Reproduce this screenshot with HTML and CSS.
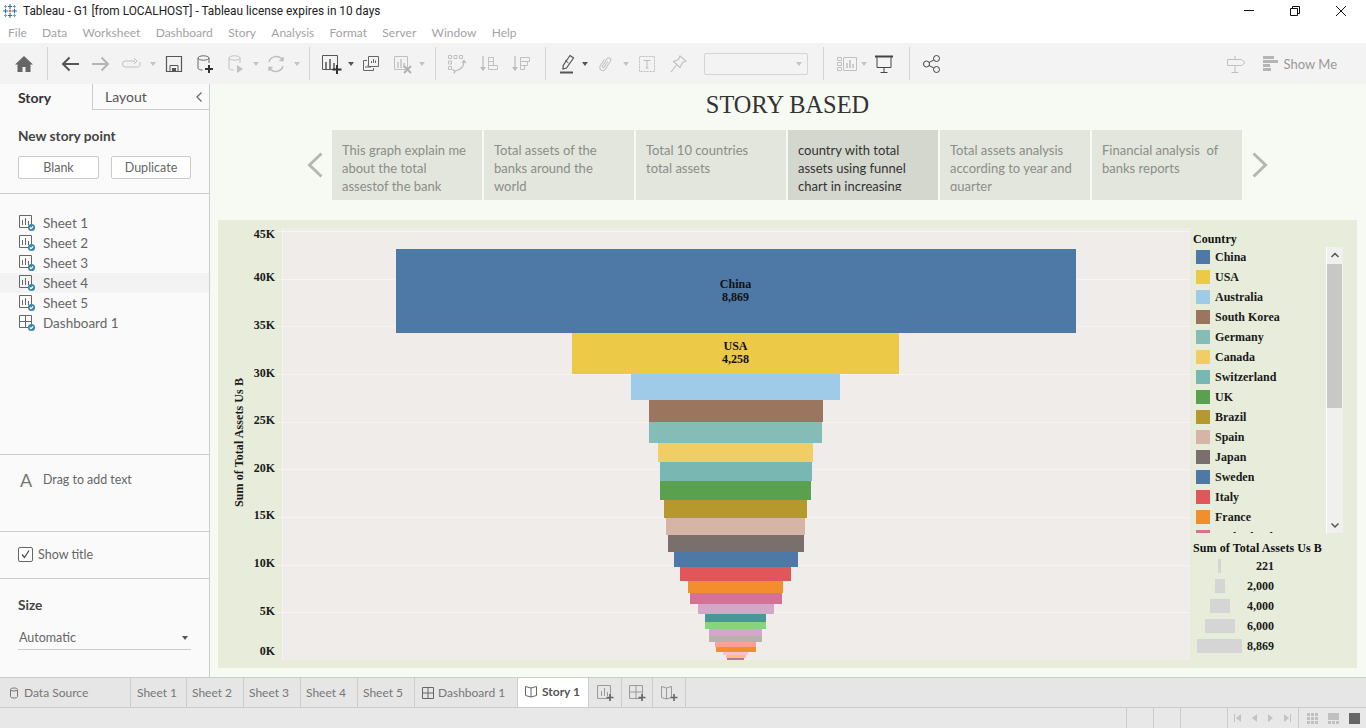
FILE: index.html
```html
<!DOCTYPE html>
<html lang="en">
<head>
    <meta charset="UTF-8">
    <title>Tableau - G1 [from LOCALHOST] - Tableau license expires in 10 days</title>
    <link rel="stylesheet" href="styles.css">
</head>
<body>
    <!-- Icon sprites -->
    <svg class="sprites" xmlns="http://www.w3.org/2000/svg">
        <symbol id="i-sheet" viewBox="0 0 18 18">
            <path d="M1.5 1.5h12v12h-12z" fill="none" stroke="#666"/>
            <path d="M4.5 6v5M7.5 4v7M10.5 7v4" stroke="#666" fill="none"/>
            <circle cx="13.5" cy="13.5" r="3.6" fill="#3f87a6"/>
            <path d="M11.8 13.5l1.2 1.2 2.1-2.2" stroke="#fff" stroke-width="1.1" fill="none"/>
        </symbol>
        <symbol id="i-dash" viewBox="0 0 18 18">
            <path d="M1.5 1.5h12v12h-12zM7.5 1.5v12M1.5 7.5h12" fill="none" stroke="#666"/>
            <circle cx="13.5" cy="13.5" r="3.6" fill="#3f87a6"/>
            <path d="M11.8 13.5l1.2 1.2 2.1-2.2" stroke="#fff" stroke-width="1.1" fill="none"/>
        </symbol>
        <symbol id="i-plus-sheet" viewBox="0 0 20 20">
            <path d="M2.5 2.5h13v13h-13z" fill="none" stroke="#999"/>
            <path d="M6.5 8v5M9.5 5v8M12.5 9v4" stroke="#999" fill="none"/>
            <path d="M15 11v7M11.5 14.5h7" stroke="#666" stroke-width="1.6"/>
        </symbol>
        <symbol id="i-plus-dash" viewBox="0 0 20 20">
            <path d="M2.5 2.5h13v13h-13zM9 2.5v13M2.5 9h13" fill="none" stroke="#999"/>
            <path d="M15 11v7M11.5 14.5h7" stroke="#666" stroke-width="1.6"/>
        </symbol>
        <symbol id="i-plus-story" viewBox="0 0 20 20">
            <path d="M2.5 3.5l5 1.5 5-1.5v11l-5 1.500-5-1.500zM7.500 5v11" fill="none" stroke="#999"/>
            <path d="M15 11v7M11.500 14.500h7" stroke="#666" stroke-width="1.6"/>
        </symbol>
    </svg>

    <header class="titlebar">
        <svg class="app-logo" width="14" height="14" viewBox="0 0 14 14">
            <path d="M7 0v5M4.800 2.500h4.400M7 9v5M4.800 11.500h4.400M0 7h5M2.500 4.800v4.400M9 7h5M11.500 4.800v4.400" stroke="#2e6f9e" stroke-width="1.100" fill="none"/>
            <path d="M2.500 1v3M1 2.500h3M11.500 1v3M10 2.500h3M2.500 10v3M1 11.500h3M11.500 10v3M10 11.500h3" stroke="#6fa3c4" stroke-width="1" fill="none"/>
            <path d="M7 5.500v3M5.500 7h3" stroke="#c0473f" stroke-width="1"/>
        </svg>
        <span class="app-title">Tableau - G1 [from LOCALHOST] - Tableau license expires in 10 days</span>
        <div class="window-controls">
            <svg width="12" height="12" viewBox="0 0 12 12"><path d="M1 5.500h10" stroke="#111"/></svg>
            <svg width="12" height="12" viewBox="0 0 12 12"><path d="M1.500 3.500h7v7h-7zM3.500 3.500v-2h7v7h-2" fill="none" stroke="#111"/></svg>
            <svg width="12" height="12" viewBox="0 0 12 12"><path d="M1 1l10 10M11 1l-10 10" stroke="#111"/></svg>
        </div>
    </header>

    <nav class="menubar">
        <span>File</span><span>Data</span><span>Worksheet</span><span>Dashboard</span><span>Story</span><span>Analysis</span><span>Format</span><span>Server</span><span>Window</span><span>Help</span>
    </nav>

    <div class="toolbar">
        <div class="tool-group group-home">
            <span class="tool"><svg width="20" height="20" viewBox="0 0 20 20"><path d="M10 2L1 10.500h2.500V18h5v-5h3v5h5v-7.500H19z" fill="#666"/></svg></span>
        </div>
        <div class="tool-group group-file">
            <span class="tool"><svg width="20" height="20" viewBox="0 0 20 20"><path d="M19 10H3M9.500 3.500L3 10l6.500 6.500" fill="none" stroke="#555" stroke-width="2"/></svg></span>
            <span class="tool"><svg width="20" height="20" viewBox="0 0 20 20"><path d="M1 10h16M10.500 3.500L17 10l-6.500 6.500" fill="none" stroke="#b5b5b5" stroke-width="2"/></svg></span>
            <span class="tool"><svg width="20" height="20" viewBox="0 0 20 20"><path d="M13 7H3.500a2.500 2.500 0 0 0 0 6h12a2.500 2.500 0 0 0 2.500-3V8M12 4l3 3-3 3" fill="none" stroke="#c0c0c0"/></svg></span>
            <span class="caret-box"><i class="caret caret-off"></i></span>
            <span class="tool"><svg width="20" height="20" viewBox="0 0 20 20"><path d="M2.500 2.500h15v15h-15z" fill="none" stroke="#555" stroke-width="1.200"/><path d="M6 17v-5.500h8V17" fill="none" stroke="#555"/><path d="M8 14h4v3H8z" fill="#555"/></svg></span>
            <span class="tool"><svg width="20" height="20" viewBox="0 0 20 20"><ellipse cx="8.500" cy="4" rx="5.500" ry="2.200" fill="none" stroke="#666"/><path d="M3 4v10c0 1.300 2 2 4.500 2M14 4v5" fill="none" stroke="#666"/><path d="M14 11v8M10 15h8" stroke="#333" stroke-width="2"/></svg></span>
            <span class="tool"><svg width="20" height="20" viewBox="0 0 20 20"><ellipse cx="8.500" cy="4" rx="5.500" ry="2.200" fill="none" stroke="#c0c0c0"/><path d="M3 4v10c0 1.300 2 2 4.500 2M14 4v5" fill="none" stroke="#c0c0c0"/><path d="M11 11l6 4-6 4z" fill="#c0c0c0"/></svg></span>
            <span class="caret-box caret-box-sm"><i class="caret caret-off"></i></span>
            <span class="tool"><svg width="20" height="20" viewBox="0 0 20 20"><path d="M3 8a7.500 7.500 0 0 1 13.500-2M17 12a7.500 7.500 0 0 1-13.500 2M13.500 6.500h3.500V3M6.500 13.500H3V17" fill="none" stroke="#bdbdbd" stroke-width="1.400"/></svg></span>
            <span class="caret-box"><i class="caret caret-off"></i></span>
        </div>
        <div class="tool-group group-sheet">
            <span class="tool"><svg width="22" height="22" viewBox="0 0 22 22"><path d="M2.500 2.500h15v14h-15z" fill="none" stroke="#555"/><path d="M6 9v7M10 6v10M14 10v6" stroke="#555" stroke-width="1.500"/><path d="M17 12v9M12.500 16.500h9" stroke="#333" stroke-width="2"/></svg></span>
            <span class="caret-box caret-box-sm"><i class="caret"></i></span>
            <span class="tool"><svg width="20" height="20" viewBox="0 0 20 20"><path d="M7.500 2.500h10v10h-10z" fill="none" stroke="#666"/><path d="M10.500 9V7M12.500 9V5M14.500 9V6.500" stroke="#666"/><path d="M6 6.500H2.500v10h10V14" fill="none" stroke="#666"/><path d="M5 14v-2M7 14v-3M9 14v-1.500" stroke="#666"/></svg></span>
            <span class="tool"><svg width="20" height="20" viewBox="0 0 20 20"><path d="M2.500 2.500h13v13h-13z" fill="none" stroke="#c0c0c0"/><path d="M6 8v6M9 5v9M12 9v5" stroke="#c0c0c0" stroke-width="1.400"/><path d="M12 12l7 7M19 12l-7 7" stroke="#b0b0b0" stroke-width="1.800"/></svg></span>
            <span class="caret-box caret-box-sm"><i class="caret caret-off"></i></span>
        </div>
        <div class="tool-group group-sort">
            <span class="tool"><svg width="20" height="20" viewBox="0 0 20 20"><path d="M1.500 1.500h3v3h-3zM7 1.500h3v3H7zM12.500 1.500h3v3h-3zM1.500 7h3v3h-3zM1.500 12.500h3v3h-3z" fill="none" stroke="#c0c0c0"/><path d="M17 7c0 5-3 9-9 10M5.500 15.500L8 17l-1 2.500M15 9l2-2.500 2 2.500" fill="none" stroke="#b8b8b8" stroke-width="1.200"/></svg></span>
            <span class="tool"><svg width="20" height="20" viewBox="0 0 20 20"><path d="M4 2v14" stroke="#bbb" stroke-width="1.200"/><path d="M1 13l3 4 3-4z" fill="#bbb"/><path d="M9.500 3.500h5v4h-5zM9.500 7.500h5v4h-5zM9.500 11.500h9v4h-9z" fill="none" stroke="#c0c0c0"/></svg></span>
            <span class="tool"><svg width="20" height="20" viewBox="0 0 20 20"><path d="M4 2v14" stroke="#bbb" stroke-width="1.200"/><path d="M1 13l3 4 3-4z" fill="#bbb"/><path d="M9.500 3.500h9v4h-9zM9.500 7.500h7v4h-7zM9.500 11.500h4v4h-4z" fill="none" stroke="#c0c0c0"/></svg></span>
        </div>
        <div class="tool-group group-format">
            <span class="tool tool-narrow"><svg width="20" height="20" viewBox="0 0 20 20"><path d="M12 1.500l3.500 2.500-7 10-3.500 1 .2-3.500z" fill="none" stroke="#555" stroke-width="1.200"/><path d="M7 6.500l3.500 2.500" stroke="#555"/><path d="M2 18.500h13" stroke="#555" stroke-width="2"/></svg></span>
            <span class="caret-box caret-box-sm"><i class="caret"></i></span>
            <span class="tool"><svg width="20" height="20" viewBox="0 0 20 20"><path d="M7 6.500V14a3 3 0 0 0 6 0V4.500a2 2 0 0 0-4 0V13a1 1 0 0 0 2 0V6.500" fill="none" stroke="#c4c4c4" stroke-width="1.100" transform="rotate(32 10 10)"/></svg></span>
            <span class="caret-box"><i class="caret caret-off"></i></span>
            <span class="tool"><svg width="20" height="20" viewBox="0 0 20 20"><path d="M2.500 2.500h15v15h-15z" fill="none" stroke="#bdbdbd" stroke-dasharray="2 1"/><path d="M6.500 6.500h7M10 6.500v7.500M8.500 14h3" fill="none" stroke="#bdbdbd"/></svg></span>
            <span class="tool"><svg width="20" height="20" viewBox="0 0 20 20"><path d="M12 2l6 5-3.500 1.500-2.500 5-6.500-6 5-2zM8.500 11L3 18" fill="none" stroke="#c0c0c0" stroke-width="1.100"/></svg></span>
            <span class="font-select"><i class="caret caret-off"></i></span>
        </div>
        <div class="tool-group group-view">
            <span class="tool tool-narrow"><svg width="20" height="20" viewBox="0 0 20 20"><path d="M.500 3.500h4v3h-4zM.500 8.500h4v3h-4zM.500 13.500h4v3h-4zM6.500 3.500h13v13h-13z" fill="none" stroke="#c0c0c0"/><path d="M10 9v5M13 6v8M16 10v4" stroke="#bbb" stroke-width="1.400"/></svg></span>
            <span class="caret-box caret-box-sm"><i class="caret caret-off"></i></span>
            <span class="tool"><svg width="20" height="20" viewBox="0 0 20 20"><path d="M1 2.500h18" stroke="#444" stroke-width="2"/><path d="M3 3v10.500h14V3M10 14v4M6.500 18.500h7" fill="none" stroke="#444"/></svg></span>
        </div>
        <div class="tool-group group-share">
            <span class="tool"><svg width="20" height="20" viewBox="0 0 20 20"><circle cx="14.500" cy="4.500" r="3" fill="none" stroke="#444"/><circle cx="14.500" cy="15.500" r="3" fill="none" stroke="#444"/><circle cx="4.500" cy="10" r="3" fill="none" stroke="#444"/><path d="M7.200 8.500l4.700-2.600M7.200 11.500l4.700 2.600" stroke="#444"/></svg></span>
        </div>
        <div class="toolbar-right">
            <svg width="20" height="20" viewBox="0 0 20 20"><path d="M1.500 5.500h14l3.500 3-3.500 3h-14zM9 2v3.500M9 11.500V18M5.500 18.500h7" fill="none" stroke="#c0c0c0"/></svg>
            <span class="show-me">
                <svg width="15" height="16" viewBox="0 0 15 16"><path d="M0 0h11v3H0zM0 4h15v3H0zM0 8h7v3H0zM0 12h8v3H0z" fill="#b5b5b5"/></svg>
                Show Me
            </span>
        </div>
    </div>

    <main class="main">
        <aside class="sidebar">
            <div class="side-tabs">
                <div class="side-tab active">Story</div>
                <div class="side-tab">Layout
                    <svg class="collapse" width="8" height="12" viewBox="0 0 8 12"><path d="M6.500 1.500L2 6l4.500 4.500" fill="none" stroke="#666" stroke-width="1.200"/></svg>
                </div>
            </div>
            <section class="side-new">
                <h3>New story point</h3>
                <div class="side-buttons">
                    <button class="btn btn-blank">Blank</button>
                    <button class="btn btn-dup">Duplicate</button>
                </div>
            </section>
            <section class="side-list">
                <div class="sheet-row"><svg width="18" height="18"><use href="#i-sheet"/></svg>Sheet 1</div>
                <div class="sheet-row"><svg width="18" height="18"><use href="#i-sheet"/></svg>Sheet 2</div>
                <div class="sheet-row"><svg width="18" height="18"><use href="#i-sheet"/></svg>Sheet 3</div>
                <div class="sheet-row hover"><svg width="18" height="18"><use href="#i-sheet"/></svg>Sheet 4</div>
                <div class="sheet-row"><svg width="18" height="18"><use href="#i-sheet"/></svg>Sheet 5</div>
                <div class="sheet-row"><svg width="18" height="18"><use href="#i-dash"/></svg>Dashboard 1</div>
            </section>
            <section class="side-text">
                <span class="big-a">A</span>Drag to add text
            </section>
            <section class="side-title">
                <span class="checkbox"><svg width="13" height="13" viewBox="0 0 13 13"><path d="M3 6.500l2.500 3L10 2.500" fill="none" stroke="#444" stroke-width="1.200"/></svg></span>Show title
            </section>
            <section class="side-size">
                <h3>Size</h3>
                <div class="size-select">Automatic<i class="caret"></i></div>
            </section>
        </aside>

        <div class="story">
            <h1 class="story-title">STORY BASED</h1>
            <div class="story-nav">
                <svg class="nav-prev" width="16" height="26" viewBox="0 0 16 26"><path d="M14.500 1.500L2.500 13l12 11.500" fill="none" stroke="#b5b8b0" stroke-width="3"/></svg>
                <div class="points">
                    <div class="point"><p>This graph explain me about the total assestof the bank</p></div>
                    <div class="point"><p>Total assets of the banks around the world</p></div>
                    <div class="point"><p>Total 10 countries total assets</p></div>
                    <div class="point current"><p>country with total assets using funnel chart in increasing order</p></div>
                    <div class="point"><p>Total assets analysis according to year and quarter</p></div>
                    <div class="point"><p>Financial analysis&nbsp; of banks reports</p></div>
                </div>
                <svg class="nav-next" width="16" height="26" viewBox="0 0 16 26"><path d="M1.500 1.500L13.500 13l-12 11.500" fill="none" stroke="#b5b8b0" stroke-width="3"/></svg>
            </div>

            <div class="dashboard">
                <div class="y-title"><span>Sum of Total Assets Us B</span></div>
                <div class="y-axis">
                    <div class="tick tick-top">45K</div>
                    <div class="tick">40K</div>
                    <div class="tick">35K</div>
                    <div class="tick">30K</div>
                    <div class="tick">25K</div>
                    <div class="tick">20K</div>
                    <div class="tick">15K</div>
                    <div class="tick">10K</div>
                    <div class="tick">5K</div>
                    <div class="tick tick-bottom">0K</div>
                </div>
                <div class="plot">
                    <div class="gridlines"></div>
                    <div class="funnel">
                        <div class="bar" style="width:680px;height:84px;background:#4e79a7">China<br>8,869</div>
                        <div class="bar" style="width:327px;height:41px;background:#edc948">USA<br>4,258</div>
                        <div class="bar" style="width:209px;height:26px;background:#a0cbe8"></div>
                        <div class="bar" style="width:174px;height:22px;background:#9c755f"></div>
                        <div class="bar" style="width:173px;height:21px;background:#86bcb6"></div>
                        <div class="bar" style="width:155px;height:19px;background:#f1ce63"></div>
                        <div class="bar" style="width:152px;height:19px;background:#79b7b2"></div>
                        <div class="bar" style="width:151px;height:19px;background:#59a14f"></div>
                        <div class="bar" style="width:143px;height:18px;background:#b6992d"></div>
                        <div class="bar" style="width:139px;height:17px;background:#d7b5a6"></div>
                        <div class="bar" style="width:136px;height:17px;background:#79706e"></div>
                        <div class="bar" style="width:124px;height:15px;background:#4e79a7"></div>
                        <div class="bar" style="width:111px;height:14px;background:#e15759"></div>
                        <div class="bar" style="width:95px;height:12px;background:#f28e2b"></div>
                        <div class="bar" style="width:92px;height:11px;background:#d37295"></div>
                        <div class="bar" style="width:76px;height:10px;background:#d4a6c8"></div>
                        <div class="bar" style="width:61px;height:8px;background:#499894"></div>
                        <div class="bar" style="width:61px;height:7px;background:#8cd17d"></div>
                        <div class="bar" style="width:53px;height:7px;background:#d4a6c8"></div>
                        <div class="bar" style="width:53px;height:6px;background:#bab0ac"></div>
                        <div class="bar" style="width:41px;height:5px;background:#ff9d9a"></div>
                        <div class="bar" style="width:40px;height:5px;background:#f28e2b"></div>
                        <div class="bar" style="width:25px;height:3px;background:#fabfd2"></div>
                        <div class="bar" style="width:20px;height:3px;background:#ffbe7d"></div>
                        <div class="bar" style="width:17px;height:2px;background:#b07aa1"></div>
                    </div>
                </div>
                <div class="legend">
                    <div class="legend-title">Country</div>
                    <div class="legend-scroll">
                        <div class="legend-items">
                            <div class="legend-item"><i style="background:#4e79a7"></i>China</div>
                            <div class="legend-item"><i style="background:#edc948"></i>USA</div>
                            <div class="legend-item"><i style="background:#a0cbe8"></i>Australia</div>
                            <div class="legend-item"><i style="background:#9c755f"></i>South Korea</div>
                            <div class="legend-item"><i style="background:#86bcb6"></i>Germany</div>
                            <div class="legend-item"><i style="background:#f1ce63"></i>Canada</div>
                            <div class="legend-item"><i style="background:#79b7b2"></i>Switzerland</div>
                            <div class="legend-item"><i style="background:#59a14f"></i>UK</div>
                            <div class="legend-item"><i style="background:#b6992d"></i>Brazil</div>
                            <div class="legend-item"><i style="background:#d7b5a6"></i>Spain</div>
                            <div class="legend-item"><i style="background:#79706e"></i>Japan</div>
                            <div class="legend-item"><i style="background:#4e79a7"></i>Sweden</div>
                            <div class="legend-item"><i style="background:#e15759"></i>Italy</div>
                            <div class="legend-item"><i style="background:#f28e2b"></i>France</div>
                            <div class="legend-item"><i style="background:#d37295"></i>Netherlands</div>
                        </div>
                        <div class="scrollbar">
                            <svg width="16" height="17" viewBox="0 0 16 17"><path d="M4.500 10l3.500-3.500 3.500 3.500" fill="none" stroke="#555" stroke-width="1.500"/></svg>
                            <div class="thumb"></div>
                            <div class="track"></div>
                            <svg width="16" height="15" viewBox="0 0 16 15"><path d="M4.500 5.500l3.500 3.500 3.500-3.500" fill="none" stroke="#555" stroke-width="1.500"/></svg>
                        </div>
                    </div>
                    <div class="legend-title size-title">Sum of Total Assets Us B</div>
                    <div class="size-row"><span class="size-cell"><i style="width:3px"></i></span><b>221</b></div>
                    <div class="size-row"><span class="size-cell"><i style="width:10px"></i></span><b>2,000</b></div>
                    <div class="size-row"><span class="size-cell"><i style="width:20px"></i></span><b>4,000</b></div>
                    <div class="size-row"><span class="size-cell"><i style="width:30px"></i></span><b>6,000</b></div>
                    <div class="size-row"><span class="size-cell"><i style="width:45px"></i></span><b>8,869</b></div>
                </div>
            </div>
        </div>
    </main>

    <div class="tabbar">
        <div class="tab tab-source">
            <svg width="10" height="12" viewBox="0 0 10 12"><path d="M1.500 2.500c0-2 7-2 7 0v7c0 2-7 2-7 0zM1.500 3c1 1.300 6 1.300 7 0" fill="none" stroke="#777"/></svg>
            Data Source
        </div>
        <div class="tab tab-sheet">Sheet 1</div>
        <div class="tab tab-sheet">Sheet 2</div>
        <div class="tab tab-sheet">Sheet 3</div>
        <div class="tab tab-sheet">Sheet 4</div>
        <div class="tab tab-sheet">Sheet 5</div>
        <div class="tab tab-dash">
            <svg width="12" height="12" viewBox="0 0 12 12"><path d="M.500.500h11v11H.500zM6 .500v11M.500 6h11" fill="none" stroke="#666"/></svg>
            Dashboard 1
        </div>
        <div class="tab tab-story">
            <svg width="12" height="13" viewBox="0 0 12 13"><path d="M.500 1.500L6 3l5.500-1.500v9L6 12 .500 10.500zM6 3v9" fill="none" stroke="#666"/></svg>
            Story 1
        </div>
        <div class="tab tab-add"><svg width="20" height="20"><use href="#i-plus-sheet"/></svg></div>
        <div class="tab tab-add tab-add-sm"><svg width="20" height="20"><use href="#i-plus-dash"/></svg></div>
        <div class="tab tab-add"><svg width="20" height="20"><use href="#i-plus-story"/></svg></div>
    </div>

    <footer class="statusbar">
        <div class="status-cell"></div>
        <div class="status-cell"></div>
        <div class="status-cell"></div>
        <div class="status-cell status-nav">
            <svg width="60" height="10" viewBox="0 0 60 10">
                <path d="M1.500 1v8" stroke="#c4c4c4"/><path d="M8 1L3 5l5 4zM24 1l-5 4 5 4zM35 1l5 4-5 4zM51 1l5 4-5 4z" fill="#c4c4c4"/><path d="M57.500 1v8" stroke="#c4c4c4"/>
            </svg>
        </div>
        <div class="status-views">
            <svg width="11" height="11" viewBox="0 0 11 11"><path d="M0 0h3v3H0zM4 0h3v3H4zM8 0h3v3H8zM0 4h3v3H0zM4 4h3v3H4zM8 4h3v3H8zM0 8h3v3H0zM4 8h3v3H4zM8 8h3v3H8z" fill="#c0c0c0"/></svg>
            <svg width="11" height="11" viewBox="0 0 11 11"><path d="M0 0h11v7H0zM0 8h3v3H0zM4 8h3v3H4zM8 8h3v3H8z" fill="#c0c0c0"/></svg>
            <svg width="11" height="11" viewBox="0 0 11 11"><path d="M0 0h11v11H0z" fill="#666"/></svg>
        </div>
    </footer>
</body>
</html>
```
FILE: styles.css
```css
* {
    box-sizing: border-box;
}
body {
    margin: 0;
    width: 1366px;
    height: 728px;
    overflow: hidden;
    display: flex;
    flex-direction: column;
    font-family: Lato, sans-serif;
    font-size: 13px;
    color: #666;
    background-color: #fff;
}
.sprites {
    display: none;
}
.caret {
    display: block;
    width: 0;
    height: 0;
    border-left: 3.5px solid transparent;
    border-right: 3.5px solid transparent;
    border-top: 4px solid #555;
}
.caret-off {
    border-top-color: #c4c4c4;
}

/* Window title and menu */
.titlebar {
    height: 22px;
    flex: none;
    display: flex;
    align-items: center;
    padding-left: 3px;
    font-family: Roboto, sans-serif;
    font-size: 11.85px;
    color: #222;
}
.app-title {
    margin-left: 6px;
}
.window-controls {
    margin-left: auto;
    display: flex;
    gap: 34px;
    padding-right: 19px;
}
.menubar {
    height: 21px;
    flex: none;
    display: flex;
    align-items: center;
    gap: 15.3px;
    padding-left: 8px;
    font-size: 12px;
    color: #a3a3a3;
}

/* Toolbar */
.toolbar {
    height: 41px;
    flex: none;
    display: flex;
    align-items: stretch;
    background-color: #f3f3f3;
    padding: 4px 0;
}
.tool-group {
    display: flex;
    align-items: center;
    gap: 1px;
    border-right: 1px solid #d4d4d4;
}
.tool {
    width: 30px;
    display: flex;
    justify-content: center;
    align-items: center;
}
.tool-narrow {
    width: 24px;
}
.caret-box {
    width: 10px;
    display: flex;
    justify-content: center;
}
.caret-box-sm {
    width: 8px;
}
.group-home {
    width: 48px;
    padding-left: 9px;
}
.group-file {
    width: 262px;
    padding-left: 7px;
}
.group-sheet {
    width: 126px;
    padding-left: 6px;
}
.group-sort {
    width: 110px;
    padding-left: 6px;
    gap: 2px;
}
.group-format {
    width: 278px;
    padding-left: 10px;
}
.group-view {
    width: 86px;
    padding-left: 11px;
}
.group-share {
    border-right: 0;
    padding-left: 7px;
}
.font-select {
    width: 104px;
    height: 22px;
    margin-left: 10px;
    border: 1px solid #d4d4d4;
    border-radius: 2px;
    display: flex;
    align-items: center;
    justify-content: flex-end;
    padding-right: 5px;
}
.toolbar-right {
    margin-left: auto;
    display: flex;
    align-items: center;
    padding-right: 29px;
    gap: 17px;
}
.show-me {
    display: flex;
    align-items: center;
    gap: 6px;
    font-size: 13px;
    color: #999;
}

/* Main */
.main {
    flex: 1;
    min-height: 0;
    display: flex;
}
.sidebar {
    width: 210px;
    flex: none;
    display: flex;
    flex-direction: column;
    background-color: #fafafa;
    border-right: 1px solid #ccc;
}
.sidebar section {
    border-bottom: 1px solid #ccc;
}
.sidebar h3 {
    margin: 0;
    font-size: 13.7px;
    font-weight: bold;
    color: #444;
}
.side-tabs {
    height: 26px;
    flex: none;
    display: flex;
}
.side-tab {
    display: flex;
    align-items: center;
    font-size: 14px;
    color: #555;
}
.side-tab.active {
    width: 92px;
    padding-left: 18px;
    font-weight: bold;
    color: #333;
}
.side-tab:not(.active) {
    flex: 1;
    padding-left: 12px;
    border-left: 1px solid #ccc;
    border-bottom: 1px solid #ccc;
}
.collapse {
    margin-left: auto;
    margin-right: 6px;
}
.side-new {
    height: 84px;
    flex: none;
    padding: 17px 18px 0;
}
.side-buttons {
    display: flex;
    justify-content: space-between;
    margin-top: 12px;
}
.btn {
    height: 23px;
    padding: 0;
    background-color: #fff;
    border: 1px solid #ccc;
    border-radius: 2px;
    font-family: inherit;
    font-size: 12.5px;
    color: #666;
}
.btn-blank {
    width: 81px;
}
.btn-dup {
    width: 80px;
}
.side-list {
    height: 261px;
    flex: none;
    padding-top: 19px;
}
.sheet-row {
    height: 20px;
    display: flex;
    align-items: center;
    gap: 7px;
    padding-left: 18px;
    font-size: 13.5px;
}
.sheet-row.hover {
    background-color: #f3f3f3;
}
.side-text {
    height: 77px;
    flex: none;
    display: flex;
    align-items: flex-start;
    padding: 16px 0 0 20px;
    font-size: 12.4px;
    line-height: 18px;
}
.big-a {
    width: 23px;
    font-size: 18px;
    line-height: 19px;
    color: #777;
}
.side-title {
    height: 47px;
    flex: none;
    display: flex;
    align-items: center;
    gap: 5px;
    padding: 0 0 2px 18px;
    font-size: 12.5px;
}
.checkbox {
    width: 15px;
    height: 15px;
    border: 1px solid #666;
    border-radius: 2px;
    background-color: #fff;
    display: flex;
    align-items: center;
    justify-content: center;
}
.sidebar .side-size {
    flex: 1;
    padding: 17px 18px 0;
    border-bottom: 0;
}
.size-select {
    margin-top: 16px;
    height: 21px;
    display: flex;
    align-items: center;
    justify-content: space-between;
    border-bottom: 1px solid #ccc;
    padding: 0 3px 3px 1px;
    font-size: 12.5px;
}

/* Story */
.story {
    flex: 1;
    min-width: 0;
    padding: 0 9px 0 8px;
    background-color: #f7faf2;
}
.story-title {
    height: 46px;
    margin: 0;
    padding-top: 5px;
    text-align: center;
    font-family: "Liberation Serif", serif;
    font-size: 24.4px;
    font-weight: normal;
    line-height: 32px;
    color: #333;
}
.story-nav {
    height: 70px;
    display: flex;
    align-items: center;
    padding-left: 89px;
}
.nav-prev {
    margin-right: 9px;
}
.nav-next {
    margin-left: 10px;
}
.points {
    display: flex;
    gap: 2px;
}
.point {
    width: 150px;
    height: 70px;
    padding: 11px 10px 0;
    background-color: #e3e6dd;
    color: #8b8d87;
    font-size: 13px;
    line-height: 18px;
}
.point p {
    margin: 0;
    height: 50px;
    overflow: hidden;
}
.point.current {
    background-color: #d4d7cd;
    color: #333;
}

/* Dashboard */
.dashboard {
    height: 448px;
    margin-top: 20px;
    padding-top: 8px;
    display: flex;
    background-color: #e8ecdb;
    font-family: "Liberation Serif", serif;
    font-size: 12px;
    font-weight: bold;
    color: #1a1a1a;
}
.y-title {
    width: 15px;
    margin-left: 14px;
    height: 428px;
    display: flex;
    align-items: center;
    justify-content: center;
    writing-mode: vertical-rl;
    letter-spacing: 0.08px;
}
.y-title span {
    transform: rotate(180deg);
    white-space: nowrap;
}
.y-axis {
    width: 35px;
    padding-right: 7px;
    height: 432px;
    margin-top: -1px;
    display: flex;
    flex-direction: column;
}
.tick {
    height: 47.67px;
    display: flex;
    align-items: center;
    justify-content: flex-end;
}
.tick-top {
    height: 27px;
    align-items: flex-start;
}
.tick-bottom {
    height: 24px;
    align-items: flex-end;
}
.plot {
    width: 908px;
    height: 432px;
    position: relative;
    background: linear-gradient(#f6f4f1, #f6f4f1) left / 1px 100% no-repeat, #efece9;
}
.gridlines {
    position: absolute;
    top: 3px;
    left: -5px;
    right: 0;
    bottom: 0;
    background-image: repeating-linear-gradient(to bottom, #f6f4f1 0, #f6f4f1 1px, transparent 1px, transparent 47.67px);
}
.funnel {
    position: relative;
    margin-right: 1px;
    padding-top: 21px;
    display: flex;
    flex-direction: column;
    align-items: center;
}
.bar {
    flex: none;
    text-align: center;
    line-height: 13px;
    color: #111;
}
.bar:nth-child(1) {
    padding-top: 29px;
}
.bar:nth-child(2) {
    padding-top: 7px;
}
.legend {
    flex: 1;
    min-width: 0;
    padding: 3px 14px 0 3px;
}
.legend-title {
    height: 16px;
    line-height: 16px;
    white-space: nowrap;
    letter-spacing: 0.08px;
    color: #111;
}
.legend-scroll {
    height: 286px;
    display: flex;
    overflow: hidden;
}
.legend-items {
    flex: 1;
    min-width: 0;
    padding-left: 3px;
}
.legend-item {
    height: 20px;
    display: flex;
    align-items: center;
    gap: 5px;
    font-size: 12px;
}
.legend-item i {
    width: 14px;
    height: 14px;
    flex: none;
}
.scrollbar {
    width: 17px;
    flex: none;
    display: flex;
    flex-direction: column;
    background-color: #f0f0f0;
    border-left: 1px solid #fff;
}
.thumb {
    width: 15px;
    height: 144px;
    background-color: #c8c8c8;
}
.track {
    flex: 1;
}
.size-title {
    margin-top: 7px;
}
.size-row {
    height: 20px;
    display: flex;
    align-items: center;
}
.size-cell {
    width: 53px;
    display: flex;
    justify-content: center;
}
.size-cell i {
    height: 14px;
    background-color: #d5d5d5;
}
.size-row b {
    width: 28px;
    text-align: right;
}

/* Bottom tabs */
.tabbar {
    height: 31px;
    flex: none;
    display: flex;
    background-color: #e6e6e6;
    border-top: 1px solid #ccc;
    border-bottom: 1px solid #ccc;
    font-size: 12px;
    color: #777;
}
.tab {
    display: flex;
    align-items: center;
    justify-content: center;
    gap: 5px;
    border-right: 1px solid #ccc;
}
.tab-source {
    width: 131px;
    justify-content: flex-start;
    padding-left: 9px;
}
.tab-sheet {
    width: 57px;
    justify-content: flex-start;
    padding-left: 5px;
}
.tab-source + .tab-sheet {
    width: 56px;
    padding-left: 6px;
}
.tab-dash {
    width: 103px;
    justify-content: flex-start;
    gap: 4px;
    padding-left: 7px;
}
.tab-story {
    width: 71px;
    justify-content: flex-start;
    padding: 0 0 3px 7px;
    background-color: #fff;
    font-weight: bold;
    color: #555;
}
.tab-add {
    width: 33px;
}
.tab-add-sm {
    width: 31px;
}

/* Status bar */
.statusbar {
    height: 20px;
    flex: none;
    display: flex;
    justify-content: flex-end;
    background-color: #e8e8e8;
}
.status-cell {
    width: 27px;
    border-left: 1px solid #ccc;
}
.status-cell:nth-child(3) {
    width: 47px;
}
.status-nav {
    width: 71px;
    display: flex;
    align-items: center;
    justify-content: center;
}
.status-views {
    width: 68px;
    display: flex;
    align-items: center;
    gap: 10px;
    padding-left: 8px;
    border-left: 1px solid #ccc;
}
```
